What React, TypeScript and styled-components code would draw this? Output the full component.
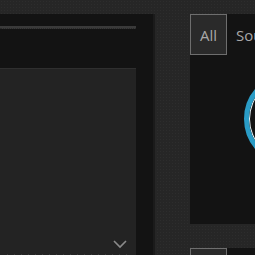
import React from 'react';
import styled, { createGlobalStyle } from 'styled-components';

const GlobalStyle = createGlobalStyle`
  html, body {
    margin: 0;
    padding: 0;
    width: 255px;
    height: 255px;
    overflow: hidden;
    background-color: #262626;
    background-image: radial-gradient(#2d2d2d 0.6px, transparent 0.7px);
    background-size: 3px 3px;
    font-family: 'Open Sans', 'Noto Sans', sans-serif;
  }
`;

const Page = styled.div`
  display: flex;
  align-items: flex-start;
  padding-top: 14px;
  height: 241px;
  overflow: hidden;
`;

const LeftPanel = styled.div`
  flex: 0 0 155px;
  height: 260px;
  box-sizing: border-box;
  padding: 12px 17px 0 0;
  background: #131313;
  border-right: 2px solid #1b1b1b;
  display: flex;
  flex-direction: column;
`;

const TopBar = styled.div`
  height: 2px;
  background: #3a3a3a;
  border-bottom: 1px dotted #2a2a2a;
`;

const Editor = styled.div`
  margin-top: 39px;
  flex: 1;
  position: relative;
  background: #232323;
  border-top: 1px solid #2f2f2f;
`;

const Chevron = styled.svg`
  position: absolute;
  left: 112px;
  top: 170px;
`;

const Dots = styled.div`
  position: absolute;
  left: 4px;
  right: 4px;
  top: 184px;
  height: 6px;
  background-image: radial-gradient(#3a3a3a 0.7px, transparent 0.8px);
  background-size: 7px 3px;
`;

const RightColumn = styled.div`
  margin-left: 35px;
  flex: 0 0 90px;
  display: flex;
  flex-direction: column;
`;

const Tabs = styled.div`
  display: flex;
  height: 41px;
`;

const Tab = styled.div<{ active?: boolean }>`
  box-sizing: border-box;
  flex-shrink: 0;
  width: ${({ active }) => (active ? '37px' : '60px')};
  height: 41px;
  display: flex;
  align-items: center;
  justify-content: ${({ active }) => (active ? 'center' : 'flex-start')};
  padding-left: ${({ active }) => (active ? '0' : '8px')};
  font-size: 15px;
  color: #a8a8a8;
  background: ${({ active }) => (active ? '#2a2a2a' : '#131313')};
  border: 1px solid ${({ active }) => (active ? '#6e6e6e' : '#131313')};
  white-space: nowrap;
`;

const Content = styled.div`
  height: 169px;
  background: #131313;
  position: relative;
  overflow: hidden;
`;

const Ring = styled.div`
  position: absolute;
  left: 54px;
  top: 18px;
  width: 92px;
  height: 92px;
  box-sizing: border-box;
  border-radius: 50%;
  border: 5px solid #2a9cc6;
  box-shadow: inset 0 0 0 1px #e8f4f8;
`;

const SecondTabs = styled.div`
  margin-top: 24px;
  display: flex;
`;

export default function App() {
  return (
    <>
      <GlobalStyle />
      <Page>
        <LeftPanel>
          <TopBar />
          <Editor>
            <Dots />
            <Chevron width="16" height="10" viewBox="0 0 16 10">
              <path d="M2 2 L8 8 L14 2" fill="none" stroke="#8a8a8a" strokeWidth="1.6" />
            </Chevron>
          </Editor>
        </LeftPanel>
        <RightColumn>
          <Tabs>
            <Tab active>All</Tab>
            <Tab>Source</Tab>
          </Tabs>
          <Content>
            <Ring />
          </Content>
          <SecondTabs>
            <Tab active />
            <Tab />
          </SecondTabs>
        </RightColumn>
      </Page>
    </>
  );
}
